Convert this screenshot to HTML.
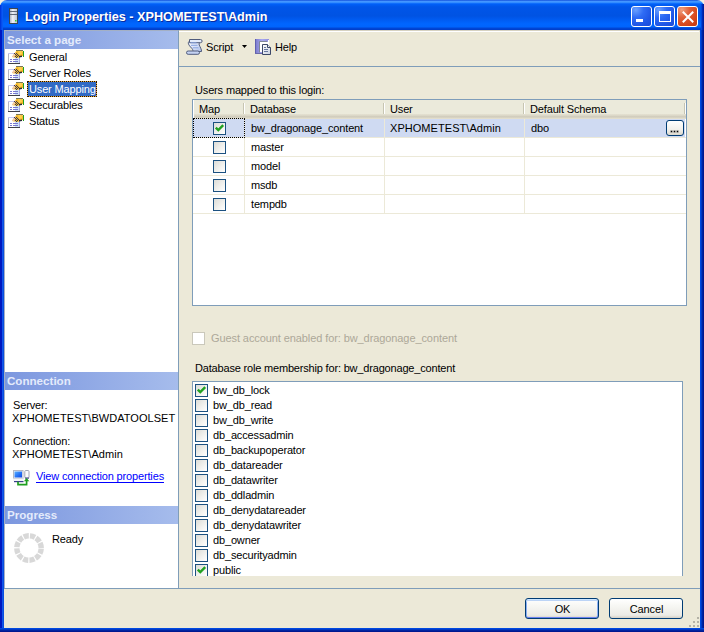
<!DOCTYPE html>
<html><head><meta charset="utf-8">
<style>
*{box-sizing:border-box;margin:0;padding:0}
html,body{width:704px;height:632px;overflow:hidden;background:#f4f0e0}
body{position:relative;font-family:"Liberation Sans",sans-serif;font-size:11px;letter-spacing:-0.15px;color:#000}
.a{position:absolute}
svg{position:absolute;overflow:visible}
.t{position:absolute;white-space:nowrap;line-height:13px}
#title{left:0;top:0;width:704px;height:30px;border-radius:7px 7px 0 0;
 background:linear-gradient(180deg,#0842d0 0px,#3d8cff 1px,#4aa0ff 2px,#1d7aff 3px,#0060f8 4px,#0055e8 7px,#0053e3 16px,#005cf2 20px,#0066ff 24px,#0064fc 27px,#0048d8 28px,#003cc8 30px)}
#frameL{left:0;top:30px;width:4px;height:602px;background:linear-gradient(90deg,#0018c0 0,#0018c0 2px,#1a5ef0 2px,#0a4ee0 3px)}
#frameR{left:700px;top:30px;width:4px;height:602px;background:linear-gradient(90deg,#0052e8 0,#0040d8 1px,#0030b0 2px,#001890 3px)}
#frameB{left:0;top:628px;width:704px;height:4px;background:linear-gradient(180deg,#0052e8 0,#0040d8 1px,#0030b0 2px,#001890 3px)}
#client{left:4px;top:30px;width:696px;height:598px;background:#ece9d8;border-top:1px solid #d6d2c2}
#left{left:4px;top:30px;width:175px;height:559px;background:#fff;border-left:1px solid #a4b0c4;border-top:1px solid #a4b0c4;border-right:1px solid #7f9db9}
.hdr{position:absolute;left:5px;width:173px;height:18px;background:linear-gradient(90deg,#7c97df,#a6bcec);color:#e4ebfb;font-weight:bold;font-size:11.6px;letter-spacing:0;line-height:18px;padding-left:2px;white-space:nowrap}
.cb{position:absolute;width:13px;height:13px;border:1px solid #1c5180;background:linear-gradient(135deg,#dcdcd7 0%,#f2f2ef 60%,#fff 100%)}
.btn{position:absolute;width:74px;height:21px;border:1px solid #003c74;border-radius:3px;background:linear-gradient(180deg,#fff 0,#f6f6f2 40%,#ecebe6 85%,#d6d0c5 100%)}
.caption{position:absolute;left:25px;top:8px;color:#fff;font-weight:bold;font-size:13.6px;transform:scaleX(0.933);transform-origin:0 0;letter-spacing:0;line-height:18px;white-space:nowrap;text-shadow:1px 1px #0a2a9e}
.tbtn{position:absolute;top:6px;width:21px;height:21px;border:1px solid #fff;border-radius:3px;background:radial-gradient(circle at 20% 15%,#6aa0ff 0,#2f6cf5 35%,#1f56e6 70%,#1a4bd8 100%)}
.gh{position:absolute;top:103px;width:2px;height:11px;border-left:1px solid #c7c5b2;border-right:1px solid #fff}
.gv{position:absolute;width:1px;background:#ece9d8}
.gr{position:absolute;height:1px;background:#ece9d8;left:193px;width:493px}
</style></head><body>
<div class="a" id="title"></div>
<!-- app icon -->
<svg style="left:9px;top:8px" width="9" height="16" viewBox="0 0 9 16">
 <defs><linearGradient id="srv" x1="0" x2="1"><stop offset="0" stop-color="#a0a8b8"/><stop offset="0.4" stop-color="#f0f2f8"/><stop offset="1" stop-color="#b8c0d0"/></linearGradient></defs>
 <rect x="0.5" y="0.5" width="8" height="15" fill="url(#srv)" stroke="#404850"/>
 <rect x="1" y="3" width="7" height="1" fill="#606878"/>
 <rect x="1" y="6" width="7" height="1" fill="#606878"/>
 <rect x="6" y="12" width="1.5" height="1.5" fill="#30d030"/>
</svg>
<div class="caption">Login Properties - XPHOMETEST\Admin</div>
<div class="tbtn" style="left:631px"><div class="a" style="left:4px;top:12px;width:7px;height:3px;background:#fff"></div></div>
<div class="tbtn" style="left:654px"><div class="a" style="left:4px;top:4px;width:12px;height:11px;border:1px solid #fff;border-top-width:3px"></div></div>
<div class="tbtn" style="left:677px;background:radial-gradient(circle at 20% 15%,#f0a080 0,#e06038 35%,#d44418 75%,#c03810 100%)">
 <svg style="left:4px;top:4px" width="12" height="12" viewBox="0 0 12 12"><path d="M1.5 1.5 L10.5 10.5 M10.5 1.5 L1.5 10.5" stroke="#fff" stroke-width="2" stroke-linecap="square"/></svg>
</div>
<div class="a" id="frameL"></div>
<div class="a" style="left:0;top:5px;width:3px;height:25px;background:linear-gradient(90deg,#0030d8,#0040e4 1px,#0a58f4 2px)"></div>
<div class="a" id="frameR"></div>
<div class="a" style="left:701px;top:4px;width:3px;height:26px;background:linear-gradient(90deg,#0050f0,#0038c8 1px,#0020a0 2px)"></div>
<div class="a" id="frameB"></div>
<div class="a" id="client"></div>
<div class="a" style="left:179px;top:31px;width:520px;height:1px;background:#fff"></div>
<div class="a" id="left"></div>

<div class="hdr" style="top:31px">Select a page</div>
<!-- page icons -->
<svg width="0" height="0" style="left:0;top:0"><defs>
 <symbol id="pg" viewBox="0 0 16 16">
  <rect x="0" y="4" width="12" height="11" fill="#fff"/>
  <rect x="7" y="8" width="5" height="7" fill="#cfe4f6"/>
  <rect x="0" y="4" width="8" height="1" fill="#c8c8f0"/>
  <rect x="0" y="5" width="1" height="10" fill="#b8b8c0"/>
  <rect x="11" y="8" width="1" height="7" fill="#a8a8e0"/>
  <rect x="0" y="14" width="12" height="1" fill="#404048"/>
  <rect x="2" y="10" width="2" height="1" fill="#7878d0"/><rect x="5" y="10" width="5" height="1" fill="#7878d0"/>
  <rect x="2" y="12" width="2" height="1" fill="#7878d0"/><rect x="5" y="12" width="5" height="1" fill="#7878d0"/>
  <path d="M4 8 L6 5 L8 2.5 L9 1.5 L14 1.5 L15 3 L15 7 L12 7.5 L10 9 L8 8.5 L6 8.5 Z" fill="#f4b828"/>
  <path d="M4 8 L5 6 L7 4 L8 5 L6 8 Z" fill="#f0c8a8"/>
  <path d="M10 2 L13.5 2 L14 5 L11 6 Z" fill="#ffd050"/>
  <rect x="8" y="1" width="7" height="1" fill="#787858"/>
  <path d="M11 7 L14 6.5 L14 8 L11 8.5Z" fill="#282838"/>
  <path d="M6 4 h1 v1 h-1z M8 4 h1 v1 h-1z M7 5 h1 v1 h-1z M9 5 h1 v1 h-1z M8 6 h1 v1 h-1z M10 6 h1 v1 h-1z M9 7 h1 v1 h-1z M7 7 h1 v1 h-1z M8 8 h1 v1 h-1z" fill="#383850"/>
  <rect x="15" y="2" width="1" height="6" fill="#20a020"/>
 </symbol>
</defs></svg>
<svg style="left:8px;top:49px" width="16" height="16"><use href="#pg"/></svg>
<svg style="left:8px;top:65px" width="16" height="16"><use href="#pg"/></svg>
<svg style="left:8px;top:81px" width="16" height="16"><use href="#pg"/></svg>
<svg style="left:8px;top:97px" width="16" height="16"><use href="#pg"/></svg>
<svg style="left:8px;top:113px" width="16" height="16"><use href="#pg"/></svg>
<div class="t" style="left:29px;top:51px">General</div>
<div class="t" style="left:29px;top:67px">Server Roles</div>
<div class="a" style="left:27px;top:81px;width:70px;height:16px;background:#316ac5;box-shadow:inset 0 0 0 1px #e8a838;outline:1px dotted #201000;outline-offset:-1px"></div>
<div class="t" style="left:29px;top:83px;color:#fff">User Mapping</div>
<div class="t" style="left:29px;top:99px">Securables</div>
<div class="t" style="left:29px;top:115px">Status</div>

<div class="hdr" style="top:372px">Connection</div>
<div class="t" style="left:13px;top:399px">Server:</div>
<div class="t" style="left:12px;top:412px;letter-spacing:0.05px">XPHOMETEST\BWDATOOLSET</div>
<div class="t" style="left:13px;top:435px">Connection:</div>
<div class="t" style="left:12px;top:448px;letter-spacing:0.05px">XPHOMETEST\Admin</div>
<svg style="left:13px;top:470px" width="17" height="16" viewBox="0 0 17 16">
 <defs><linearGradient id="scrn" x1="0" y1="0" x2="1" y2="1"><stop offset="0" stop-color="#5ab0ff"/><stop offset="0.5" stop-color="#2a78f8"/><stop offset="1" stop-color="#1048e0"/></linearGradient></defs>
 <rect x="0.5" y="0.5" width="9.5" height="8" fill="#eef0f6" stroke="#b4b8c4"/>
 <rect x="1.5" y="1.5" width="7.5" height="6" fill="url(#scrn)"/>
 <rect x="0" y="8.5" width="10.5" height="2.5" fill="#f2f4fa"/>
 <rect x="1" y="11" width="9.5" height="1.2" fill="#383f88"/>
 <rect x="11.8" y="0.5" width="4.2" height="7.5" rx="1" fill="#fbfcff" stroke="#a0a6b4"/>
 <rect x="12" y="7.6" width="4" height="1" fill="#383f88"/>
 <path d="M5 11.8 V14.7 H13.6 V9.5" fill="none" stroke="#1f9f1f" stroke-width="1.7"/>
 <path d="M10.9 11.2 L13.6 8 L16.3 11.2 Z" fill="#1f9f1f"/>
</svg>
<div class="t" style="left:36px;top:470px;color:#0000ff;text-decoration:underline;text-underline-offset:2px">View connection properties</div>

<div class="hdr" style="top:506px">Progress</div>
<svg style="left:14px;top:533px" width="30" height="30" viewBox="0 0 30 30">
 <circle cx="15" cy="15" r="12.2" fill="none" stroke="#d8d8d8" stroke-width="5.4" stroke-dasharray="5.2 1.19" stroke-dashoffset="-0.6"/>
</svg>
<div class="t" style="left:52px;top:533px">Ready</div>

<!-- toolbar -->
<svg style="left:186px;top:39px" width="17" height="16" viewBox="0 0 17 16">
 <defs><linearGradient id="scr" x1="0" y1="0" x2="1" y2="1"><stop offset="0" stop-color="#f8faff"/><stop offset="0.6" stop-color="#d4def6"/><stop offset="1" stop-color="#a8bce6"/></linearGradient></defs>
 <path d="M3.5 2 C1.2 3.5, 2.5 6, 5.5 9 C6.5 10, 7 11, 7 12.5 H15.5 C15.8 10.5, 14 8, 13.2 6 C12.8 4.8, 13.5 3.5, 14.5 2 Z" fill="url(#scr)" stroke="#505c7c"/>
 <path d="M3.5 0.5 H14.5 A1.6 1.6 0 0 1 14.5 3.7 H3.5 Z" fill="#e4ecfa" stroke="#505c7c"/>
 <path d="M4.5 3.8 H10.5 M5 6.3 H11.5 M6.8 8.8 H12.5" stroke="#88a4e0" stroke-width="1"/>
 <rect x="0.5" y="12" width="13" height="3.3" rx="1.65" fill="#c4d2f2" stroke="#505c7c"/>
</svg>
<div class="t" style="left:206px;top:41px">Script</div>
<svg style="left:242px;top:45px" width="5" height="3" viewBox="0 0 5 3"><path d="M0 0 H5 L2.5 3 Z" fill="#000"/></svg>
<svg style="left:255px;top:39px" width="17" height="17" viewBox="0 0 17 17">
 <defs><linearGradient id="bk" x1="0" x2="1"><stop offset="0" stop-color="#7878c8"/><stop offset="0.5" stop-color="#a8a8f0"/><stop offset="1" stop-color="#9090dc"/></linearGradient>
 <linearGradient id="dc" x1="0" y1="0" x2="1" y2="1"><stop offset="0" stop-color="#ffffff"/><stop offset="1" stop-color="#c8d0e0"/></linearGradient></defs>
 <rect x="0" y="0" width="14" height="15" fill="url(#bk)"/>
 <rect x="0" y="0" width="1" height="15" fill="#6060b0"/>
 <rect x="0" y="14" width="14" height="1" fill="#6a6aa8"/>
 <path d="M5 13 V3 H13 V13 Z" fill="#fff"/>
 <path d="M4.5 13.5 V2.5 H12" fill="none" stroke="#808898"/>
 <rect x="13" y="1" width="1" height="6" fill="#fff"/>
 <path d="M7.5 5.5 H12.5 L15.5 8.5 V15.5 H7.5 Z" fill="url(#dc)" stroke="#3c4868"/>
 <path d="M12.5 5.5 V8.5 H15.5" fill="#e8ecf4" stroke="#3c4868"/>
 <path d="M9 8.5 H11 M9 10.5 H13 M9 12.5 H13" stroke="#6878a0"/>
</svg>
<div class="t" style="left:275px;top:41px">Help</div>
<div class="a" style="left:179px;top:66px;width:521px;height:1px;background:#7f9db9"></div>

<div class="t" style="left:195px;top:84px">Users mapped to this login:</div>
<!-- grid -->
<div class="a" style="left:192px;top:99px;width:495px;height:207px;border:1px solid #7f9db9;background:#fff"></div>
<div class="a" style="left:193px;top:100px;width:493px;height:19px;background:linear-gradient(180deg,#ebeadb 0,#ebeadb 14px,#e5e2d2 14px,#d8d4c4 16px,#cbc7b8 17px,#e2decd 18px);border-left:1px solid #fff"></div>
<div class="gh" style="left:243px"></div>
<div class="gh" style="left:383px"></div>
<div class="gh" style="left:523px"></div>
<div class="gh" style="left:684px"></div>
<div class="t" style="left:199px;top:103px">Map</div>
<div class="t" style="left:250px;top:103px">Database</div>
<div class="t" style="left:390px;top:103px">User</div>
<div class="t" style="left:530px;top:103px">Default Schema</div>
<!-- row highlight -->
<div class="a" style="left:193px;top:119px;width:492px;height:18px;background:#cfdaf2"></div>
<div class="gr" style="top:137px"></div>
<div class="gr" style="top:156px"></div>
<div class="gr" style="top:175px"></div>
<div class="gr" style="top:194px"></div>
<div class="gr" style="top:213px"></div>
<div class="gv" style="left:244px;top:119px;height:95px"></div>
<div class="gv" style="left:384px;top:119px;height:95px"></div>
<div class="gv" style="left:524px;top:119px;height:95px"></div>
<div class="a" style="left:193px;top:118px;width:52px;height:20px;border:1px dotted #000"></div>
<div class="cb" style="left:213px;top:122px"></div>
<svg style="left:213px;top:122px" width="13" height="13" viewBox="0 0 13 13"><path d="M2.8 5.6 L5.3 8.1 L10.2 3.2" fill="none" stroke="#21a121" stroke-width="2.4"/></svg>
<div class="cb" style="left:213px;top:141px"></div>
<div class="cb" style="left:213px;top:160px"></div>
<div class="cb" style="left:213px;top:179px"></div>
<div class="cb" style="left:213px;top:198px"></div>
<div class="t" style="left:251px;top:122px">bw_dragonage_content</div>
<div class="t" style="left:390px;top:122px;letter-spacing:0.05px">XPHOMETEST\Admin</div>
<div class="t" style="left:531px;top:122px">dbo</div>
<div class="a" style="left:666px;top:120px;width:18px;height:16px;border:1px solid #003c74;border-radius:3px;background:linear-gradient(180deg,#fff,#f2f1ec 60%,#dcd8cc)"></div>
<div class="a" style="left:671px;top:131px;width:1px;height:1px;background:#000;box-shadow:0 0 0 0.5px #555"></div>
<div class="a" style="left:674px;top:131px;width:1px;height:1px;background:#000;box-shadow:0 0 0 0.5px #555"></div>
<div class="a" style="left:677px;top:131px;width:1px;height:1px;background:#000;box-shadow:0 0 0 0.5px #555"></div>
<div class="t" style="left:251px;top:141px">master</div>
<div class="t" style="left:251px;top:160px">model</div>
<div class="t" style="left:251px;top:179px">msdb</div>
<div class="t" style="left:251px;top:198px">tempdb</div>

<div class="a" style="left:192px;top:332px;width:13px;height:13px;border:1px solid #cac8bb;background:#fff"></div>
<div class="t" style="left:211px;top:332px;color:#aca899;letter-spacing:-0.09px">Guest account enabled for: bw_dragonage_content</div>
<div class="t" style="left:195px;top:362px;letter-spacing:-0.18px">Database role membership for: bw_dragonage_content</div>
<!-- list -->
<div class="a" style="left:192px;top:381px;width:491px;height:195px;border:1px solid #7f9db9;border-bottom:0;background:#fff;overflow:hidden">
 <div class="a" style="left:0;top:0;width:1px;height:195px;background:#fff"></div>
</div>
<div id="roles">
<div class="cb" style="left:195px;top:384px;height:13px;"></div>
<svg style="left:195px;top:384px" width="13" height="13" viewBox="0 0 13 13"><path d="M2.8 5.6 L5.3 8.1 L10.2 3.2" fill="none" stroke="#21a121" stroke-width="2.4"/></svg>
<div class="t" style="left:213px;top:384px">bw_db_lock</div>
<div class="cb" style="left:195px;top:399px;height:13px;"></div>
<div class="t" style="left:213px;top:399px">bw_db_read</div>
<div class="cb" style="left:195px;top:414px;height:13px;"></div>
<div class="t" style="left:213px;top:414px">bw_db_write</div>
<div class="cb" style="left:195px;top:429px;height:13px;"></div>
<div class="t" style="left:213px;top:429px">db_accessadmin</div>
<div class="cb" style="left:195px;top:444px;height:13px;"></div>
<div class="t" style="left:213px;top:444px">db_backupoperator</div>
<div class="cb" style="left:195px;top:459px;height:13px;"></div>
<div class="t" style="left:213px;top:459px">db_datareader</div>
<div class="cb" style="left:195px;top:474px;height:13px;"></div>
<div class="t" style="left:213px;top:474px">db_datawriter</div>
<div class="cb" style="left:195px;top:489px;height:13px;"></div>
<div class="t" style="left:213px;top:489px">db_ddladmin</div>
<div class="cb" style="left:195px;top:504px;height:13px;"></div>
<div class="t" style="left:213px;top:504px">db_denydatareader</div>
<div class="cb" style="left:195px;top:519px;height:13px;"></div>
<div class="t" style="left:213px;top:519px">db_denydatawriter</div>
<div class="cb" style="left:195px;top:534px;height:13px;"></div>
<div class="t" style="left:213px;top:534px">db_owner</div>
<div class="cb" style="left:195px;top:549px;height:13px;"></div>
<div class="t" style="left:213px;top:549px">db_securityadmin</div>
<div class="cb" style="left:195px;top:564px;height:12px;border-bottom:0;"></div>
<svg style="left:195px;top:564px" width="13" height="13" viewBox="0 0 13 13"><path d="M2.8 5.6 L5.3 8.1 L10.2 3.2" fill="none" stroke="#21a121" stroke-width="2.4"/></svg>
<div class="t" style="left:213px;top:564px">public</div>
</div>

<div class="a" style="left:4px;top:588px;width:696px;height:1px;background:#7f9db9"></div>
<div class="btn" style="left:525px;top:598px;box-shadow:inset 0 1px #cee7ff,inset 0 2px #bcd4f6,inset 0 -1px #6982ee,inset 1px 0 #89adf2,inset -1px 0 #89adf2"></div>
<div class="t" style="left:525px;top:603px;width:74px;text-align:center;padding-left:1px">OK</div>
<div class="btn" style="left:609px;top:598px"></div>
<div class="t" style="left:609px;top:603px;width:74px;text-align:center;padding-left:1px">Cancel</div>
<!-- size grip -->
<svg style="left:688px;top:616px" width="12" height="12" viewBox="0 0 12 12" fill="#b4b2a6">
 <rect x="9" y="1" width="2" height="2"/><rect x="5" y="5" width="2" height="2"/><rect x="9" y="5" width="2" height="2"/>
 <rect x="1" y="9" width="2" height="2"/><rect x="5" y="9" width="2" height="2"/><rect x="9" y="9" width="2" height="2"/>
</svg>
</body></html>
